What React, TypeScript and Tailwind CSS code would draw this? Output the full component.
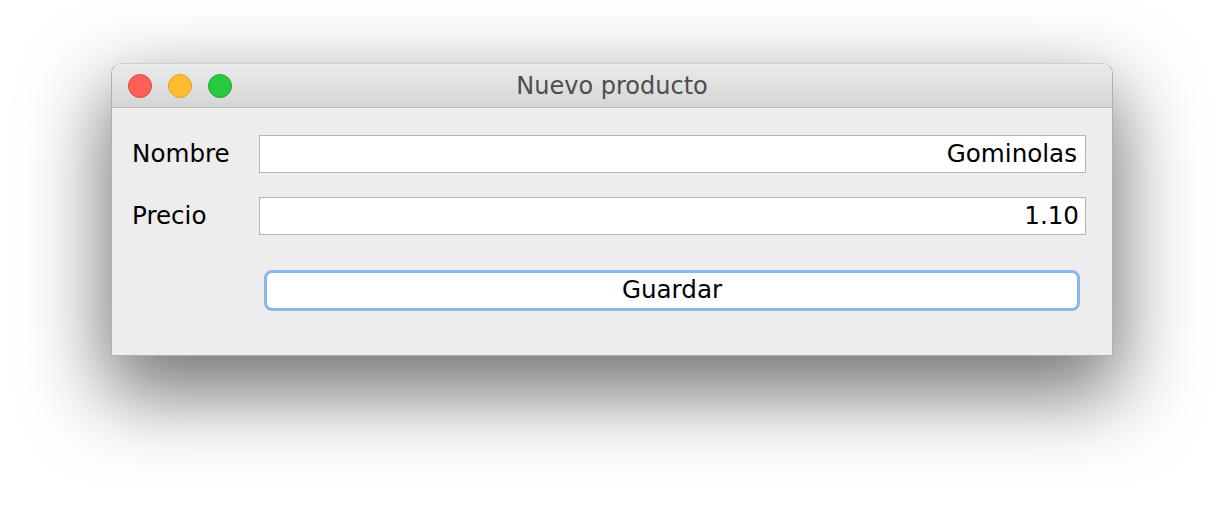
export default function App() {
  const font = { fontFamily: '"DejaVu Sans", "Liberation Sans", sans-serif' }

  return (
    <div className="w-[1224px] h-[516px] bg-white overflow-hidden pt-[63px] pl-[111px]" style={font}>
      <div className="w-[1002px] h-[293px] flex flex-col rounded-t-[10px] border border-[#b0b0b0] border-t-[#cfcfcf] bg-[#ededed] shadow-[0_32px_80px_6px_rgba(0,0,0,0.55)] overflow-hidden">
        {/* Title bar */}
        <div className="relative h-[44px] shrink-0 flex items-center bg-gradient-to-b from-[#ebebeb] to-[#d5d5d5] border-b border-[#b6b6b6]">
          <div className="flex items-center gap-[16px] pl-[16px]">
            <span className="w-[24px] h-[24px] rounded-full bg-[#fe5f57] border border-[#e0443e]" />
            <span className="w-[24px] h-[24px] rounded-full bg-[#febc2e] border border-[#dea123]" />
            <span className="w-[24px] h-[24px] rounded-full bg-[#28c840] border border-[#1aab29]" />
          </div>
          <div className="absolute inset-0 flex items-center justify-center text-[24px] text-[#4d4d4d] pt-[1px]">
            Nuevo producto
          </div>
        </div>

        {/* Form */}
        <div className="flex-1 pt-[27px] pl-[20px] pr-[26px]">
          <div className="grid grid-cols-[127px_1fr] gap-y-[24px] items-center text-[24.6px] text-black">
            <span className="pt-[1px]">Nombre</span>
            <div className="h-[38px] bg-white border border-[#b5b5b5] flex items-center justify-end pr-[8px] pt-[1px]">Gominolas</div>
            <span className="pt-[1px]">Precio</span>
            <div className="h-[38px] bg-white border border-[#b5b5b5] flex items-center justify-end pr-[6px] pt-[1px]">1.10</div>
          </div>
          <div className="pl-[132px] pr-[6px] mt-[35px]">
            <button className="w-full h-[41px] rounded-[8px] bg-white border-[3px] border-[#8ab8ec] text-[24.6px] text-black flex items-center justify-center">
              Guardar
            </button>
          </div>
        </div>
      </div>
    </div>
  )
}
